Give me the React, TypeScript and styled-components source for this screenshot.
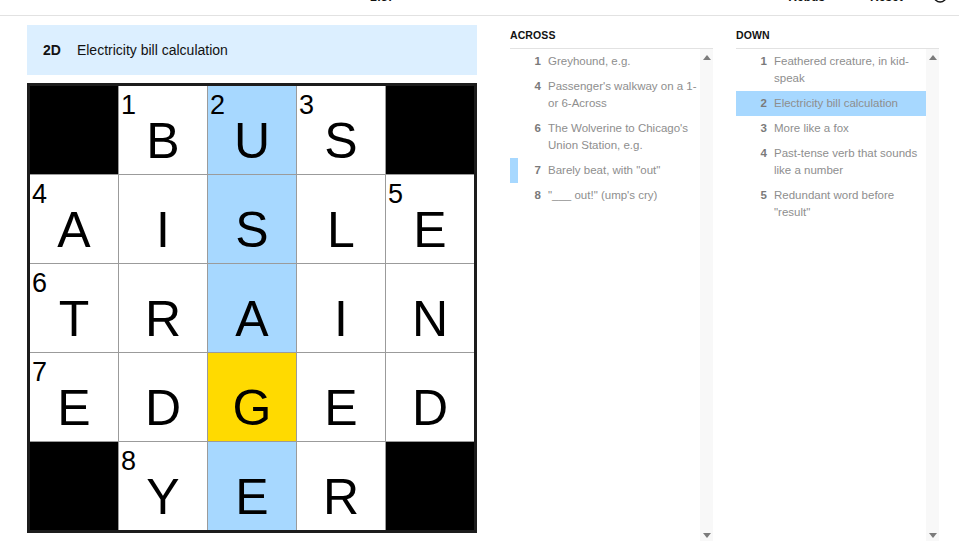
import * as React from "react";
import styled, { createGlobalStyle } from "styled-components";

const GlobalStyle = createGlobalStyle`
    html, body {
        margin: 0;
        padding: 0;
        background: #ffffff;
        font-family: "Liberation Sans", Arial, sans-serif;
        color: #121212;
    }
`

const colors = {
    line: "#e2e2e2",
    word: "#a7d8ff",
    cursor: "#ffda00",
    bar: "#dcefff",
    clue: "#8e8e8e",
    clueNum: "#7a7a7a",
}

const CPage = styled.div`
    width: 959px;
    height: 559px;
    overflow: hidden;
`

const CToolbar = styled.div`
    height: 15px;
    border-bottom: 1px solid ${colors.line};
    overflow: hidden;
`

const CToolbarRow = styled.div`
    display: flex;
    align-items: flex-start;
    margin-top: -10px;
    padding-right: 12px;
    font-size: 12px;
    line-height: 14px;
    font-weight: bold;
`

const CToolItem = styled.span<{ $gap?: number }>`
    margin-left: ${p => p.$gap ?? 0}px;
    white-space: nowrap;
`

const CHelpIcon = styled.svg`
    display: block;
    margin-top: -4px;
    margin-left: 30px;
`

const CMain = styled.div`
    display: flex;
    padding-left: 27px;
`

const CBoard = styled.div`
    flex: 0 0 450px;
    padding-top: 9px;
`

const CClueBar = styled.div`
    height: 50px;
    display: flex;
    align-items: center;
    gap: 16px;
    padding-left: 16px;
    background: ${colors.bar};
    font-size: 14px;

    b {
        font-weight: bold;
    }
`

const CGrid = styled.div`
    margin-top: 8px;
    display: grid;
    grid-template-columns: repeat(5, 88px);
    grid-template-rows: repeat(5, 88px);
    gap: 1px;
    background: #9b9b9b;
    border: 3px solid #1c1c1c;
    width: max-content;
`

const CCell = styled.div<{ $tone: "white" | "black" | "word" | "cursor" }>`
    position: relative;
    display: flex;
    align-items: flex-end;
    justify-content: center;
    padding-bottom: 8px;
    box-sizing: border-box;
    background: ${p => p.$tone === "black" ? "#000000"
        : p.$tone === "word" ? colors.word
        : p.$tone === "cursor" ? colors.cursor
        : "#ffffff"};
    font-family: "Liberation Sans", Arial, sans-serif;
    font-size: 50px;
    line-height: 1;
    color: #000000;
`

const CCellNumber = styled.span`
    position: absolute;
    top: 6px;
    left: 2px;
    font-size: 27px;
    line-height: 1;
`

const CLists = styled.div`
    display: flex;
    gap: 23px;
    margin-left: 33px;
`

const CClueColumn = styled.div`
    width: 203px;
`

const CClueHeading = styled.h3`
    margin: 0;
    padding: 12px 0 6px;
    font-size: 10.5px;
    line-height: 14px;
    font-weight: bold;
    text-transform: uppercase;
    letter-spacing: 0.1px;
    border-bottom: 1px solid ${colors.line};
`

const CClueScroller = styled.div`
    display: flex;
    height: 492px;
`

const CClueItems = styled.ol`
    flex: 1;
    margin: 0;
    padding: 0;
    list-style: none;
`

const CClueItem = styled.li<{ $tone?: "selected" | "cross" }>`
    display: flex;
    gap: 7px;
    padding: 4px 0;
    font-size: 11.5px;
    line-height: 17px;
    color: ${colors.clue};
    background: ${p => p.$tone === "selected" ? colors.word : "transparent"};
    box-shadow: ${p => p.$tone === "cross" ? `inset 8px 0 0 ${colors.word}` : "none"};
`

const CClueNumber = styled.span`
    flex: 0 0 31px;
    text-align: right;
    font-weight: bold;
    color: ${colors.clueNum};
`

const CClueText = styled.span`
    flex: 1;
`

const CScrollTrack = styled.div`
    flex: 0 0 13px;
    display: flex;
    flex-direction: column;
    justify-content: space-between;
    align-items: center;
    padding: 6px 0 3px;
    background: #f8f8f8;
`

const CArrow = styled.span<{ $down?: boolean }>`
    width: 0;
    height: 0;
    border-left: 4px solid transparent;
    border-right: 4px solid transparent;
    ${p => p.$down
        ? "border-top: 5px solid #7b7b7b;"
        : "border-bottom: 5px solid #7b7b7b;"}
`

type Tone = "white" | "black" | "word" | "cursor"

interface ICell {
    letter?: string;
    num?: number;
    tone: Tone;
}

const B: ICell = { tone: "black" }

const grid: ICell[][] = [
    [B, { letter: "B", num: 1, tone: "white" }, { letter: "U", num: 2, tone: "word" }, { letter: "S", num: 3, tone: "white" }, B],
    [{ letter: "A", num: 4, tone: "white" }, { letter: "I", tone: "white" }, { letter: "S", tone: "word" }, { letter: "L", tone: "white" }, { letter: "E", num: 5, tone: "white" }],
    [{ letter: "T", num: 6, tone: "white" }, { letter: "R", tone: "white" }, { letter: "A", tone: "word" }, { letter: "I", tone: "white" }, { letter: "N", tone: "white" }],
    [{ letter: "E", num: 7, tone: "white" }, { letter: "D", tone: "white" }, { letter: "G", tone: "cursor" }, { letter: "E", tone: "white" }, { letter: "D", tone: "white" }],
    [B, { letter: "Y", num: 8, tone: "white" }, { letter: "E", tone: "word" }, { letter: "R", tone: "white" }, B],
]

interface IClue {
    num: number;
    text: string;
    tone?: "selected" | "cross";
}

const across: IClue[] = [
    { num: 1, text: "Greyhound, e.g." },
    { num: 4, text: "Passenger's walkway on a 1- or 6-Across" },
    { num: 6, text: "The Wolverine to Chicago's Union Station, e.g." },
    { num: 7, text: "Barely beat, with \"out\"", tone: "cross" },
    { num: 8, text: "\"___ out!\" (ump's cry)" },
]

const down: IClue[] = [
    { num: 1, text: "Feathered creature, in kid-speak" },
    { num: 2, text: "Electricity bill calculation", tone: "selected" },
    { num: 3, text: "More like a fox" },
    { num: 4, text: "Past-tense verb that sounds like a number" },
    { num: 5, text: "Redundant word before \"result\"" },
]

function ClueList({ title, clues }: { title: string, clues: IClue[] }) {
    return <CClueColumn>
        <CClueHeading>{title}</CClueHeading>
        <CClueScroller>
            <CClueItems>
                {clues.map(c => <CClueItem key={c.num} $tone={c.tone}>
                    <CClueNumber>{c.num}</CClueNumber>
                    <CClueText>{c.text}</CClueText>
                </CClueItem>)}
            </CClueItems>
            <CScrollTrack>
                <CArrow />
                <CArrow $down />
            </CScrollTrack>
        </CClueScroller>
    </CClueColumn>
}

function App() {
    return <CPage>
        <GlobalStyle />
        <CToolbar>
            <CToolbarRow>
                <CToolItem $gap={-4}>▪</CToolItem>
                <CToolItem $gap={370}>2:37</CToolItem>
                <CToolItem $gap={394}>Rebus</CToolItem>
                <CToolItem $gap={45}>Reset</CToolItem>
                <CHelpIcon width="20" height="20" viewBox="0 0 20 20">
                    <circle cx="10" cy="10" r="8.5" fill="none" stroke="#121212" strokeWidth="2" />
                    <path d="M10 13v1.5" stroke="#121212" strokeWidth="2" />
                </CHelpIcon>
            </CToolbarRow>
        </CToolbar>

        <CMain>
            <CBoard>
                <CClueBar>
                    <b>2D</b>
                    <span>Electricity bill calculation</span>
                </CClueBar>
                <CGrid>
                    {grid.flatMap((row, r) => row.map((cell, c) =>
                        <CCell key={`${r}-${c}`} $tone={cell.tone}>
                            {cell.num && <CCellNumber>{cell.num}</CCellNumber>}
                            {cell.letter}
                        </CCell>
                    ))}
                </CGrid>
            </CBoard>

            <CLists>
                <ClueList title="Across" clues={across} />
                <ClueList title="Down" clues={down} />
            </CLists>
        </CMain>
    </CPage>
}

export default App;
